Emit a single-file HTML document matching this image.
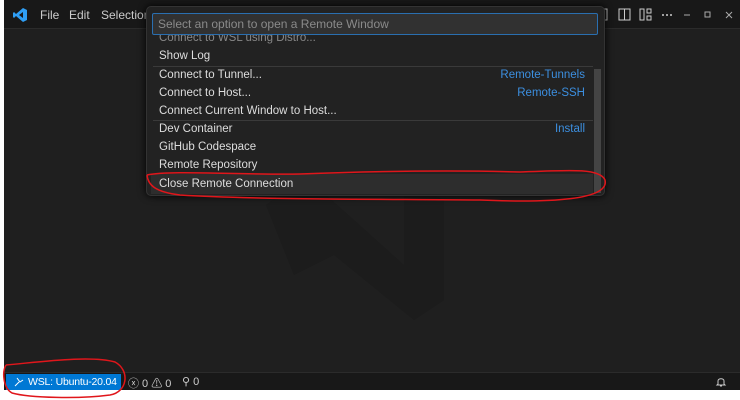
<!DOCTYPE html>
<html><head><meta charset="utf-8"><style>
*{margin:0;padding:0;box-sizing:border-box}
body{width:740px;height:400px;background:#fff;position:relative;overflow:hidden;font-family:"Liberation Sans",sans-serif}
#win{position:absolute;left:4px;top:0;width:736px;height:390px;background:#1f1f1f}
#title{position:absolute;left:0;top:0;width:736px;height:29px;background:#181818;border-bottom:1px solid #2b2b2b}
.menu{position:absolute;top:8px;color:#ccc;font-size:12px}
#status{position:absolute;left:0;top:372px;width:736px;height:18px;background:#181818;border-top:1px solid #2b2b2b;color:#ccc;font-size:11px;white-space:nowrap}
#wsl{position:absolute;left:2px;top:1px;width:115px;height:16px;background:#0078d4;color:#fff;font-size:10.5px;line-height:16px;padding-left:22px;white-space:nowrap;letter-spacing:-0.2px}
#qp{position:absolute;left:146px;top:6px;width:459px;height:190px;background:#222;border:1px solid #333;border-radius:5px;box-shadow:0 0 8px #000;overflow:hidden}
#inp{position:absolute;left:5px;top:6px;width:446px;height:22px;background:#313131;border:1px solid #2a6fb0;border-radius:2px;color:#8a8a8a;font-size:12px;line-height:20px;padding-left:5px;z-index:2}
.it{position:absolute;left:12px;color:#ddd;font-size:11.5px}
.r{position:absolute;right:19px;color:#3c8fe0;font-size:11.5px}
.sep{position:absolute;left:6px;width:440px;height:1px;background:#3a3a3a}
</style></head><body>
<div id="win">
<svg style="position:absolute;left:0;top:0" width="736" height="390">
<path d="M262 205 L300 175 L400 265 L400 180 L440 200 L440 300 L410 320 L330 255 L290 275 Z" fill="#1c1c1c"/>
</svg>
<div id="title">
<svg style="position:absolute;left:9px;top:8px" width="14" height="14" viewBox="0 0 14 14"><path d="M10 0 L14 2 L14 12 L10 14 L3 8 L1 10 L0 9 L0 5 L1 4 L3 6 Z M10 4 L6 7 L10 10 Z" fill="#2f9ef4"/></svg>
<span class="menu" style="left:36px">File</span>
<span class="menu" style="left:65px">Edit</span>
<span class="menu" style="left:97px">Selection</span>
<svg style="position:absolute;left:600px;top:8px" width="136" height="14">
<rect x="0" y="1" width="3" height="11" fill="none" stroke="#ccc"/>
<rect x="15" y="1" width="11" height="11" fill="none" stroke="#ccc"/><line x1="20.5" y1="1" x2="20.5" y2="12" stroke="#ccc"/>
<rect x="36" y="1" width="4" height="11" fill="none" stroke="#ccc"/><rect x="43" y="1" width="4" height="4" fill="none" stroke="#ccc"/><rect x="43" y="8" width="4" height="4" fill="none" stroke="#ccc"/>
<circle cx="59" cy="7" r="1" fill="#ccc"/><circle cx="63" cy="7" r="1" fill="#ccc"/><circle cx="67" cy="7" r="1" fill="#ccc"/>
<line x1="80" y1="7" x2="86" y2="7" stroke="#aaa"/>
<rect x="101" y="4" width="5" height="5" fill="none" stroke="#aaa"/>
<path d="M122 4 L128 10 M128 4 L122 10" stroke="#aaa"/>
</svg>
</div>
<div id="status">
<div id="wsl"><svg style="position:absolute;left:8px;top:3px" width="10" height="10"><path d="M1 9 L5 5 M3 1 L6 5 L9 3" stroke="#fff" fill="none"/></svg>WSL: Ubuntu-20.04</div>
<span style="position:absolute;left:124px;top:2px">ⓧ 0 ⚠ 0</span>
<span style="position:absolute;left:178px;top:2px">⚲ 0</span>
<svg style="position:absolute;left:711px;top:3px" width="12" height="12"><path d="M2 9 L3 8 L3 5 C3 2 9 2 9 5 L9 8 L10 9 Z M5 10 L7 10" fill="none" stroke="#ccc"/></svg>
</div>
</div>
<div id="qp">
<div id="inp">Select an option to open a Remote Window</div>
<div class="it" style="top:25px;color:#888">Connect to WSL using Distro...</div>
<div class="sep" style="top:59px"></div>
<div class="sep" style="top:113px"></div>
<div class="it" style="top:43px;background:#222;width:430px;padding-top:0">Show Log</div>
<div class="it" style="top:62px">Connect to Tunnel...</div><div class="r" style="top:62px">Remote-Tunnels</div>
<div class="it" style="top:80px">Connect to Host...</div><div class="r" style="top:80px">Remote-SSH</div>
<div class="it" style="top:98px">Connect Current Window to Host...</div>
<div class="it" style="top:116px">Dev Container</div><div class="r" style="top:116px">Install</div>
<div class="it" style="top:134px">GitHub Codespace</div>
<div class="it" style="top:152px">Remote Repository</div>
<div style="position:absolute;left:4px;top:167px;width:442px;height:20px;background:#2d2d2d"></div>
<div class="it" style="top:171px">Close Remote Connection</div>
<div style="position:absolute;left:447px;top:62px;width:7px;height:124px;background:#444"></div>
</div>
<svg style="position:absolute;left:0;top:0" width="740" height="400">
<path d="M147 175 C 170 170, 240 175, 300 174 C 380 171, 450 170, 520 172 C 570 170, 600 168, 605 180 C 610 200, 550 203, 480 200 C 400 199, 260 200, 180 195 C 155 192, 148 185, 147 175" fill="none" stroke="#e0161b" stroke-width="1.5"/>
<path d="M6 365 C 40 362, 90 355, 115 362 C 130 370, 128 392, 110 395 C 80 399, 30 398, 12 393 C 3 388, 2 372, 6 365" fill="none" stroke="#e0161b" stroke-width="1.5"/>
</svg>
</body></html>
